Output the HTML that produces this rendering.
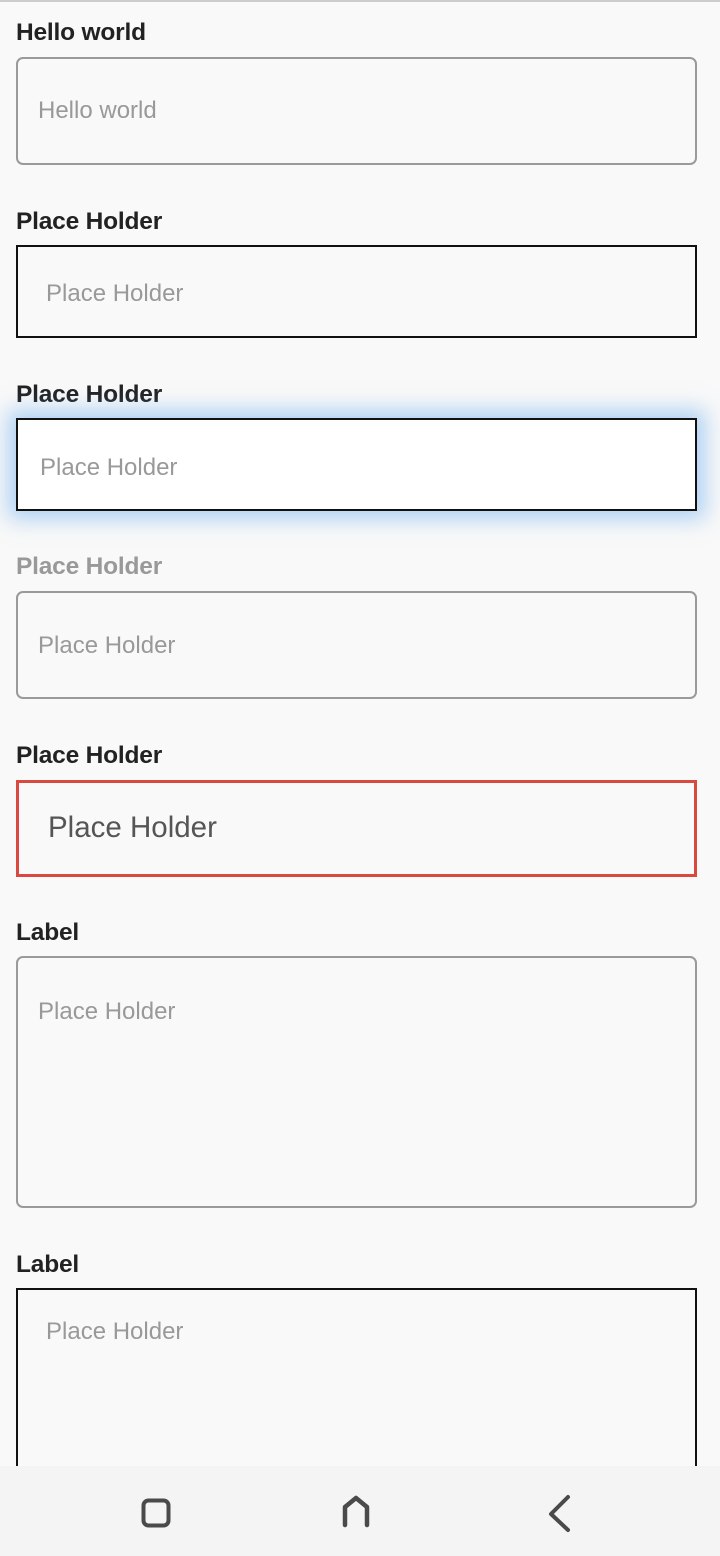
<!DOCTYPE html>
<html><head><meta charset="utf-8"><style>
*{margin:0;padding:0;box-sizing:border-box}
body{width:720px;height:1556px;background:#f9f9f9;position:relative;overflow:hidden;font-family:"Liberation Sans",sans-serif}
.l{position:absolute;left:16px;font-size:24.5px;color:#222;font-weight:bold;line-height:28px;letter-spacing:-0.2px;margin-top:2px}
.b{position:absolute;left:16px;width:681px}
.t{position:absolute;font-size:24px;color:#999;line-height:26px;margin-top:1px}
</style></head><body>
<div style="position:absolute;left:0;top:0;width:720px;height:2px;background:#ccc"></div>

<div class="l" style="top:17px">Hello world</div>
<div class="b" style="top:57px;height:108px;border:2px solid #9a9a9a;border-radius:7px"></div>
<div class="t" style="left:38px;top:97px">Hello world</div>

<div class="l" style="top:206px">Place Holder</div>
<div class="b" style="top:245px;height:93px;border:2px solid #111"></div>
<div class="t" style="left:46px;top:280px">Place Holder</div>

<div class="l" style="top:379px">Place Holder</div>
<div class="b" style="top:418px;height:93px;border:2px solid #111;background:#fff;box-shadow:0 0 20px 8px rgba(100,170,240,0.5)"></div>
<div class="t" style="left:40px;top:454px">Place Holder</div>

<div class="l" style="top:551px;color:#999">Place Holder</div>
<div class="b" style="top:591px;height:108px;border:2px solid #9a9a9a;border-radius:7px"></div>
<div class="t" style="left:38px;top:632px">Place Holder</div>

<div class="l" style="top:740px">Place Holder</div>
<div class="b" style="top:780px;height:97px;border:3px solid #d9493f"></div>
<div class="t" style="left:48px;top:811px;font-size:29.5px;color:#555;line-height:32px">Place Holder</div>

<div class="l" style="top:917px">Label</div>
<div class="b" style="top:956px;height:252px;border:2px solid #9a9a9a;border-radius:7px"></div>
<div class="t" style="left:38px;top:998px">Place Holder</div>

<div class="l" style="top:1249px">Label</div>
<div class="b" style="top:1288px;height:200px;border:2px solid #111"></div>
<div class="t" style="left:46px;top:1318px">Place Holder</div>

<div style="position:absolute;left:0;top:1466px;width:720px;height:90px;background:#f4f4f4"></div>
<svg style="position:absolute;left:0;top:1466px" width="720" height="90">
<rect x="143.5" y="34.5" width="25" height="25" rx="5" fill="none" stroke="#4a4a4a" stroke-width="4"/>
<path d="M345 59 V41 L356 32 L367 41 V59" fill="none" stroke="#4a4a4a" stroke-width="4.5" stroke-linecap="round" stroke-linejoin="round"/>
<path d="M568 31 L551 48 L568 64" fill="none" stroke="#4a4a4a" stroke-width="4" stroke-linecap="round" stroke-linejoin="round"/>
</svg>
</body></html>
